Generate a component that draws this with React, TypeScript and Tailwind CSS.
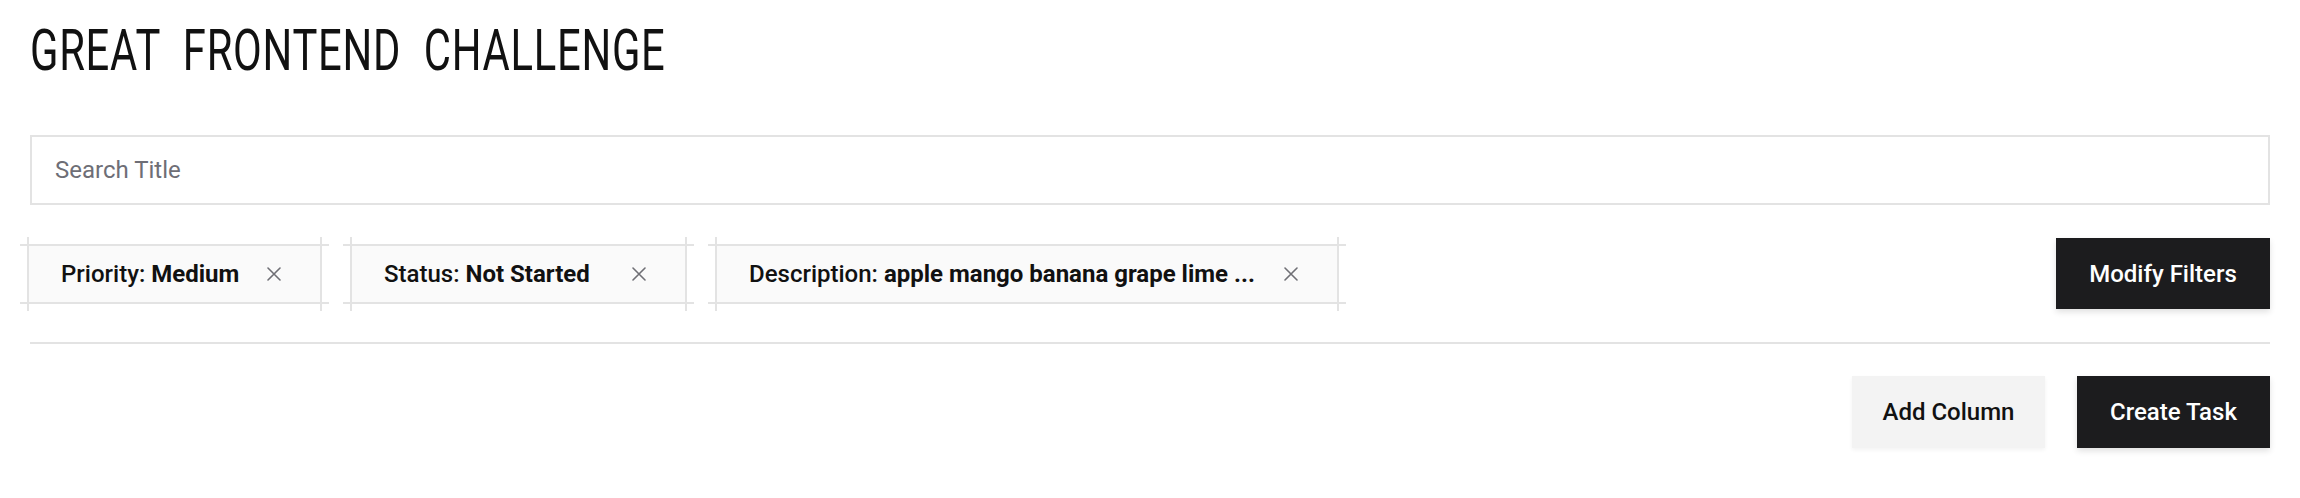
import React from "react";

function XIcon() {
  return (
    <svg width="14" height="14" viewBox="0 0 14 14" fill="none" className="shrink-0">
      <path d="M1 1L13 13M13 1L1 13" stroke="#6f6f75" strokeWidth="1.6" strokeLinecap="round" />
    </svg>
  );
}

function Chip({ label, value, width }: { label: string; value: string; width: string }) {
  return (
    <div
      className={`relative h-[60px] ${width} shrink-0 border-2 border-[#e3e3e3] bg-[#fafafa] flex items-center justify-between pl-[32px] pr-[39px] before:absolute before:pointer-events-none before:-top-[2px] before:-bottom-[2px] before:-left-[9px] before:-right-[9px] before:border-y-2 before:border-[#e3e3e3] after:absolute after:pointer-events-none after:-left-[2px] after:-right-[2px] after:-top-[9px] after:-bottom-[9px] after:border-x-2 after:border-[#e3e3e3]`}
    >
      <span className="text-[24px] leading-none text-[#111] whitespace-nowrap">
        <span className="font-medium">{label} </span>
        <span className="font-bold">{value}</span>
      </span>
      <XIcon />
    </div>
  );
}

export default function App() {
  return (
    <div className="min-h-[498px] bg-white px-[30px] pt-[21px] font-['Roboto',sans-serif] text-[#111]">
      <h1 className="h-[58px] text-[58px] leading-[58px] font-normal tracking-[1px] [word-spacing:16px] whitespace-nowrap origin-left scale-x-[0.72] text-[#111]">
        GREAT FRONTEND CHALLENGE
      </h1>

      <div className="mt-[56px] h-[70px] border-2 border-[#e3e3e3] bg-white flex items-center">
        <input
          className="w-full h-full pl-[23px] text-[24px] outline-none bg-transparent placeholder:text-[#6e6e76] text-[#111]"
          placeholder="Search Title"
        />
      </div>

      <div className="mt-[33px] h-[71px] flex items-center gap-[28px] -ml-[3px]">
        <Chip label="Priority:" value="Medium" width="w-[295px]" />
        <Chip label="Status:" value="Not Started" width="w-[337px]" />
        <Chip label="Description:" value="apple mango banana grape lime ..." width="w-[624px]" />
        <button className="ml-auto h-[71px] w-[214px] bg-[#1c1c1e] text-white text-[24px] font-medium shadow-[0_3px_6px_rgba(0,0,0,0.12)]">
          Modify Filters
        </button>
      </div>

      <div className="mt-[33px] h-[2px] bg-[#e3e3e3]" />

      <div className="mt-[32px] flex justify-end gap-[32px]">
        <button className="h-[72px] w-[193px] bg-[#f3f3f3] text-[#111] text-[24px] font-medium shadow-[0_2px_4px_rgba(0,0,0,0.05)]">
          Add Column
        </button>
        <button className="h-[72px] w-[193px] bg-[#1c1c1e] text-white text-[24px] font-medium shadow-[0_3px_6px_rgba(0,0,0,0.12)]">
          Create Task
        </button>
      </div>
    </div>
  );
}
